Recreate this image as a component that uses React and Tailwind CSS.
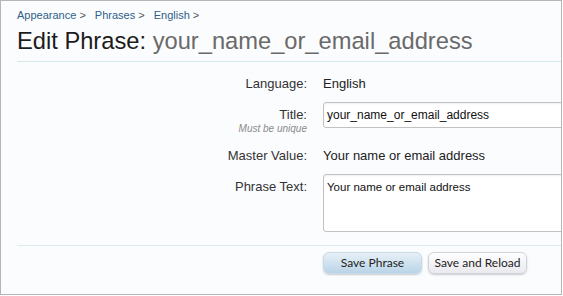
import React from "react";

const CRUMBS = ["Appearance", "Phrases", "English"];

function Row({ label, hint, children, className = "" }) {
  return (
    <div className={`flex ${className}`}>
      <div className="w-[291px] shrink-0 text-right">{label}{hint}</div>
      <div className="ml-[16px] flex-1 min-w-0">{children}</div>
    </div>
  );
}

export default function App() {
  return (
    <div className="w-[562px] h-[295px] border border-[#b5b5b5] bg-[#fbfcfe] overflow-hidden font-['Liberation_Sans',Arial,sans-serif]">
      <div className="pl-[16px]">
        {/* breadcrumb */}
        <div className="mt-[7px] flex text-[11px] leading-[14px]">
          {CRUMBS.map((c) => (
            <span key={c} className="mr-[9px] text-[#2f5f88]">
              {c} <span className="text-[#555]">&gt;</span>
            </span>
          ))}
        </div>

        <h1 className="mt-[5px] text-[23.7px] leading-[28px] text-[#1c1c1c] whitespace-nowrap">
          Edit Phrase: <span className="text-[#6a6a6a]">your_name_or_email_address</span>
        </h1>

        <div className="mt-[6px] h-px bg-[#d6e7ec]" />
      </div>

      <div className="pl-[15px] text-[13px] text-[#333]">
        <Row className="mt-[13px] leading-[18px]" label="Language:">
          <span className="text-[#222]">English</span>
        </Row>

        <Row
          className="mt-[9px]"
          label={<div className="pt-[5px] leading-[16px]">Title:</div>}
          hint={<div className="text-[10px] leading-[11px] italic text-[#8a8a8a]">Must be unique</div>}
        >
          <div className="w-[260px] h-[26px] bg-white border border-[#c2c2c2] rounded-[3px] shadow-[inset_0_1px_2px_rgba(0,0,0,0.06)] px-[3px] text-[12px] leading-[24px] text-[#111]">
            your_name_or_email_address
          </div>
        </Row>

        <Row className="mt-[13px] leading-[18px]" label="Master Value:">
          <span className="text-[#222]">Your name or email address</span>
        </Row>

        <Row className="mt-[9px]" label={<div className="pt-[4px] leading-[18px]">Phrase Text:</div>}>
          <div className="w-[260px] h-[58px] bg-white border border-[#c2c2c2] rounded-[3px] shadow-[inset_0_1px_2px_rgba(0,0,0,0.06)] px-[3px] pt-[5px] text-[11.5px] leading-[14px] text-[#111]">
            Your name or email address
          </div>
        </Row>
      </div>

      <div className="ml-[16px] mt-[13px] h-px bg-[#dcebef]" />

      <div className="mt-[6px] ml-[322px] flex gap-[6px] font-['Lato',sans-serif] text-[12px] text-[#222]">
        <button className="w-[99px] h-[22px] rounded-[6px] border border-[#c6dae8] bg-gradient-to-b from-[#e7f0f7] to-[#b9d4e7] shadow-[0_1px_2px_rgba(0,0,0,0.2)]">
          Save Phrase
        </button>
        <button className="w-[99px] h-[22px] rounded-[6px] border border-[#d2d2da] bg-gradient-to-b from-[#ffffff] to-[#e9e9ef] shadow-[0_1px_2px_rgba(0,0,0,0.2)]">
          Save and Reload
        </button>
      </div>
    </div>
  );
}
